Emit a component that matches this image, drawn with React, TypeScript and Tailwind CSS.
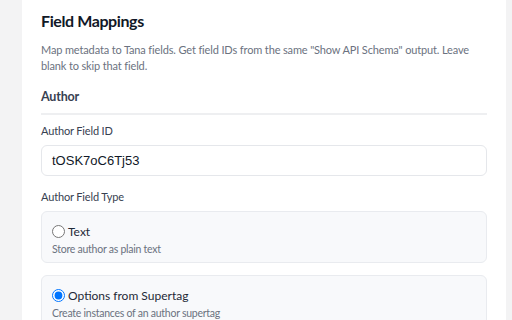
import React from "react";

function Option({ label, desc, checked }: { label: string; desc: string; checked?: boolean }) {
  return (
    <label className="block h-[52px] rounded-[6px] border border-[#e9ebef] bg-[#f8f9fb] px-[10px] pt-[10px]">
      <div className="flex items-center gap-[3px]">
        <input type="radio" name="authorType" defaultChecked={checked} className="m-0 h-[13px] w-[13px]" />
        <span className="translate-y-[1px] text-[12px] leading-[18px] text-[#1f2937]">{label}</span>
      </div>
      <div className="mt-[1px] text-[10.5px] leading-[16px] tracking-[-0.25px] text-[#6b7280]">{desc}</div>
    </label>
  );
}

export default function App() {
  return (
    <div className="h-[320px] w-[512px] overflow-hidden bg-[#f3f3f4] pl-[22px] pr-[6px] font-['Lato','Noto_Sans',sans-serif]">
      <div className="h-full bg-white px-[19px] pt-[9px]">
        <h2 className="text-[16px] leading-[24px] font-bold tracking-[-0.4px] text-[#111827]">Field Mappings</h2>
        <p className="mt-[9px] text-[11px] leading-[16px] tracking-[-0.14px] text-[#6b7280]">
          Map metadata to Tana fields. Get field IDs from the same "Show API Schema" output. Leave blank to skip that field.
        </p>
        <div className="mt-[13px] border-b-2 border-[#eeeff1] pb-[6px] text-[12.5px] leading-[20px] font-bold tracking-[-0.2px] text-[#374151]">
          Author
        </div>
        <div className="mt-[8px] text-[11px] leading-[16px] tracking-[-0.15px] text-[#374151]">Author Field ID</div>
        <div className="mt-[6px] flex h-[31px] items-center rounded-[6px] border border-[#e5e7eb] px-[10px]">
          <span className="font-['Liberation_Sans',Arial,sans-serif] text-[13px] tracking-normal text-[#111827]">tOSK7oC6Tj53</span>
        </div>
        <div className="mt-[13px] text-[11px] leading-[16px] tracking-[-0.15px] text-[#374151]">Author Field Type</div>
        <div className="mt-[6px] flex flex-col gap-[12px]">
          <Option label="Text" desc="Store author as plain text" />
          <Option label="Options from Supertag" desc="Create instances of an author supertag" checked />
        </div>
      </div>
    </div>
  );
}
